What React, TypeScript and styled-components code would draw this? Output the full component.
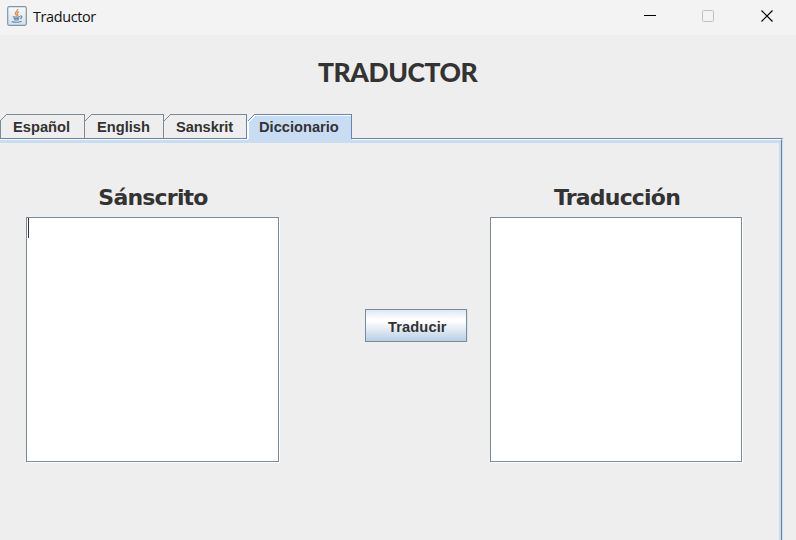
import React from "react";
import styled, { createGlobalStyle, css } from "styled-components";

const GlobalStyle = createGlobalStyle`
  * { box-sizing: border-box; }
  html, body { margin: 0; padding: 0; }
  body { background: #eeeeee; overflow: hidden; }
`;

const Window = styled.div`
  width: 796px;
  height: 540px;
  display: flex;
  flex-direction: column;
  background: #eeeeee;
  color: #333333;
  font-family: "Liberation Sans", sans-serif;
  overflow: hidden;
`;

const TitleBar = styled.header`
  height: 35px;
  flex: none;
  display: flex;
  align-items: flex-start;
  background: #f3f3f3;
  padding: 6px 22px 0 7px;
`;

const WindowTitle = styled.span`
  margin: 1px auto 0 6px;
  font: 14.4px/20px "Open Sans", sans-serif;
  letter-spacing: -0.35px;
  color: #111111;
`;

const WindowControls = styled.div`
  display: flex;
  gap: 46px;
  padding-top: 4px;
`;

const Heading = styled.h1`
  margin: 19px 0 0;
  height: 37px;
  padding-left: 318px;
  font: 900 26.5px/36px Lato, sans-serif;
  letter-spacing: -0.45px;
  white-space: nowrap;
`;

const TabStrip = styled.nav`
  display: flex;
  height: 24px;
  margin-top: 23px;
  flex: none;
`;

const Tab = styled.div<{ $width: number; $first?: boolean; $beforeSelected?: boolean; $selected?: boolean }>`
  position: relative;
  flex: none;
  width: ${(p) => p.$width}px;
  height: 24px;
  padding-left: ${(p) => (p.$first ? 13 : 12)}px;
  border-top: 1px solid #7a8a99;
  border-right: 1px solid ${(p) => (p.$beforeSelected ? "#6382bf" : "#7a8a99")};
  font: bold 14.67px/24px "Liberation Sans", sans-serif;
  letter-spacing: ${(p) => (p.$beforeSelected ? -0.1 : 0)}px;
  white-space: nowrap;
  ${(p) =>
    p.$selected &&
    css`
      height: 28px;
      z-index: 1;
      margin-left: 1px;
      padding-left: 11px;
      border: 0;
      line-height: 26px;
      background: linear-gradient(#6382bf, #6382bf) right top / 1px 25px no-repeat,
        linear-gradient(#6382bf 1px, #ffffff 1px, #ffffff 2px, #c8ddf2 2px);
    `}
`;

const Corner = styled.svg`
  position: absolute;
  left: 0;
  top: -1px;
`;

const SelectedCorner = styled(Corner)`
  left: -1px;
  top: 0;
`;

const TabPanel = styled.main`
  width: 783px;
  flex: 1;
  border-top: 1px solid #6382bf;
  border-right: 1px solid #c8ddf2;
`;

const PanelBody = styled.div`
  height: 100%;
  border-top: 1px solid #ffffff;
  border-right: 1px solid #6d82a3;
`;

const PanelInner = styled.div`
  height: 100%;
  display: flex;
  align-items: flex-start;
  border-top: 3px solid #c8ddf2;
  border-right: 2px solid #c8ddf2;
  padding: 41px 0 0 26px;
`;

const Column = styled.section`
  width: 254px;
  flex: none;
`;

const Label = styled.h2<{ $spacing: number }>`
  margin: 0;
  height: 33px;
  font: bold 22px/28px "DejaVu Sans", sans-serif;
  letter-spacing: ${(p) => p.$spacing}px;
  text-align: center;
  white-space: nowrap;
`;

const TextArea = styled.div<{ $width: number }>`
  width: ${(p) => p.$width}px;
  height: 245px;
  background: #ffffff;
  border: 1px solid #7a8a99;
  box-shadow: 1px 1px 0 #ffffff;
  padding: 0 0 0 1px;
`;

const Caret = styled.div`
  width: 1px;
  height: 20px;
  background: #333333;
`;

const TranslateButton = styled.div`
  width: 102px;
  height: 33px;
  flex: none;
  margin: 125px 23px 0 85px;
  border: 1px solid #7a8a99;
  box-shadow: 1px 0 0 #dbe5ef;
  background: linear-gradient(#dde8f3 0, #ffffff 30%, #ffffff 36%, #b8cfe5 100%);
  font: bold 14.67px/34px "Liberation Sans", sans-serif;
  letter-spacing: 0.1px;
  padding-left: 22px;
`;

function JavaIcon() {
  return (
    <svg width="20" height="20" viewBox="0 0 20 20" fill="none">
      <defs>
        <linearGradient id="plate" x1="0" y1="0" x2="0" y2="1">
          <stop stopColor="#fafafa" />
          <stop offset="1" stopColor="#d5e1ea" />
        </linearGradient>
      </defs>
      <rect x=".7" y=".7" width="18.6" height="18.6" rx="1.5" fill="url(#plate)" stroke="#7897ad" strokeWidth="1.2" />
      <path d="M10.7 3c.8 2-3.3 3-2.2 4.9l1.2 1.8M12 5.8c-2.2 1-2 1.7-1.4 2.5.4.6 0 1.2-.5 1.5" stroke="#e88a3c" strokeWidth="1.3" />
      <path d="M5.8 10.4c1.6.8 5.3.7 7.2 0M6.5 12c1.8.7 4 .7 5.8 0M7 13.5c1.5.6 3.4.6 4.8 0M13.2 10c2.2-.5 2.2 1.8 0 2.8M4.6 15.4c2.8 1.2 7.7 1.1 10-.2" stroke="#6488a3" strokeWidth="1.1" />
    </svg>
  );
}

function TabCorner({ edge }: { edge?: boolean }) {
  return (
    <Corner width="7" height="24" shapeRendering="crispEdges">
      <path d="M0 0h6v1H5v1H4v1H3v1H2v1H1v1H0z" fill="#eeeeee" />
      {edge && <path d="M0 7v17h1V7z" fill="#7a8a99" />}
      <path d="M0 6h1v1H0zM1 5h1v1H1zM2 4h1v1H2zM3 3h1v1H3zM4 2h1v1H4zM5 1h1v1H5zM6 0h1v1H6z" fill="#7a8a99" />
    </Corner>
  );
}

export default function App() {
  return (
    <>
      <GlobalStyle />
      <Window>
        <TitleBar>
          <JavaIcon />
          <WindowTitle>Traductor</WindowTitle>
          <WindowControls>
            <svg width="13" height="12" fill="none">
              <path d="M1 5.5h12" stroke="#000000" />
            </svg>
            <svg width="13" height="12" fill="none">
              <rect x=".5" y=".5" width="11" height="11" rx="1" stroke="#c0c0c0" />
            </svg>
            <svg width="13" height="12" fill="none">
              <path d="M.5.5l11 11M11.500.5l-11 11" stroke="#000000" strokeWidth="1.2" />
            </svg>
          </WindowControls>
        </TitleBar>
        <Heading>TRADUCTOR</Heading>
        <TabStrip>
          <Tab $width={85} $first>
            <TabCorner edge />
            Español
          </Tab>
          <Tab $width={79}>
            <TabCorner />
            English
          </Tab>
          <Tab $width={83} $beforeSelected>
            <TabCorner />
            Sanskrit
          </Tab>
          <Tab $width={104} $selected>
            <SelectedCorner width="8" height="25" shapeRendering="crispEdges">
              <path d="M0 0h7L1 6v1H0z" fill="#eeeeee" />
              <path d="M7 1h1v1L2 8v17H0V7h1z" fill="#ffffff" />
              <path d="M1 6h1v1H1zM2 5h1v1H2zM3 4h1v1H3zM4 3h1v1H4zM5 2h1v1H5zM6 1h1v1H6zM7 0h1v1H7z" fill="#6382bf" />
            </SelectedCorner>
            Diccionario
          </Tab>
        </TabStrip>
        <TabPanel>
          <PanelBody>
            <PanelInner>
              <Column>
                <Label $spacing={-0.8}>Sánscrito</Label>
                <TextArea $width={253}>
                  <Caret />
                </TextArea>
              </Column>
              <TranslateButton>Traducir</TranslateButton>
              <Column>
                <Label $spacing={-0.8}>Traducción</Label>
                <TextArea $width={252} />
              </Column>
            </PanelInner>
          </PanelBody>
        </TabPanel>
      </Window>
    </>
  );
}
